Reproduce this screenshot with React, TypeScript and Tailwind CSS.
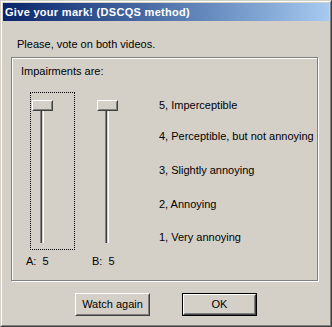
import React from "react";

const SCALE = [
  { label: "5, Imperceptible", mt: "mt-[7px]" },
  { label: "4, Perceptible, but not annoying", mt: "mt-[18px]" },
  { label: "3, Slightly annoying", mt: "mt-[21px]" },
  { label: "2, Annoying", mt: "mt-[21px]" },
  { label: "1, Very annoying", mt: "mt-[20px]" },
];

function Bevel({ children, className = "" }: { children?: React.ReactNode; className?: string }) {
  // classic raised edge: white / #404040 outside, face / #808080 inside
  return (
    <div className={`border border-t-white border-l-white border-r-[#404040] border-b-[#404040] ${className}`}>
      <div className="w-full h-full border border-t-[#d4d0c8] border-l-[#d4d0c8] border-r-[#808080] border-b-[#808080] bg-[#d4d0c8]">
        {children}
      </div>
    </div>
  );
}

function Slider({ focused }: { focused?: boolean }) {
  return (
    <div
      className={`relative w-[45px] h-[158px] border ${
        focused ? "border-dotted border-black" : "border-transparent"
      }`}
    >
      {/* channel */}
      <div className="absolute left-[9px] top-[9px] h-[141px] w-[4px] flex">
        <div className="w-px h-full bg-[#808080]" />
        <div className="w-px h-full bg-[#404040]" />
        <div className="w-px h-full bg-[#d4d0c8]" />
        <div className="w-px h-full bg-white" />
      </div>
      {/* thumb */}
      <Bevel className="absolute left-[1px] top-[7px] w-[21px] h-[11px]" />
    </div>
  );
}

function Button({ children, isDefault }: { children: React.ReactNode; isDefault?: boolean }) {
  return (
    <button className={`w-[75px] h-[23px] p-0 ${isDefault ? "border border-black" : ""}`}>
      <Bevel className="w-full h-full">
        <div className="h-full flex items-center justify-center text-black">{children}</div>
      </Bevel>
    </button>
  );
}

export default function App() {
  return (
    <div className="w-[332px] h-[327px] font-['Liberation_Sans',Arial,sans-serif] text-[11px] leading-[13px] text-black select-none">
      <div className="w-full h-full border border-t-[#d4d0c8] border-l-[#d4d0c8] border-r-[#404040] border-b-[#404040]">
        <div className="w-full h-full border border-t-white border-l-white border-r-[#808080] border-b-[#808080] bg-[#d4d0c8] p-px flex flex-col">
          {/* Title bar */}
          <div className="h-[18px] shrink-0 bg-gradient-to-r from-[#0a246a] to-[#a6caf0] pl-[2px] pt-[3px] text-white font-bold tracking-[0.3px]">
            Give your mark! (DSCQS method)
          </div>

          <div className="pl-[14px] mt-[17px]">Please, vote on both videos.</div>

          {/* Group box */}
          <div className="ml-[8px] mt-[6px] w-[307px] h-[224px] border border-[#808080] shadow-[1px_1px_0_#fff,inset_1px_1px_0_#fff] flex flex-col">
            <div className="pl-[9px] pt-[7px]">Impairments are:</div>
            <div className="flex mt-[14px]">
              <div className="w-[147px] flex flex-col">
                <div className="flex pl-[18px] gap-[20px]">
                  <Slider focused />
                  <Slider />
                </div>
                <div className="flex pl-[14px] mt-[5px] whitespace-pre">
                  <div className="w-[66px]">A:  5</div>
                  <div>B:  5</div>
                </div>
              </div>
              <div className="flex flex-col">
                {SCALE.map((s) => (
                  <div key={s.label} className={s.mt}>
                    {s.label}
                  </div>
                ))}
              </div>
            </div>
          </div>

          {/* Buttons */}
          <div className="flex justify-center gap-[32px] mt-[12px]">
            <Button>Watch again</Button>
            <Button isDefault>OK</Button>
          </div>
        </div>
      </div>
    </div>
  );
}
